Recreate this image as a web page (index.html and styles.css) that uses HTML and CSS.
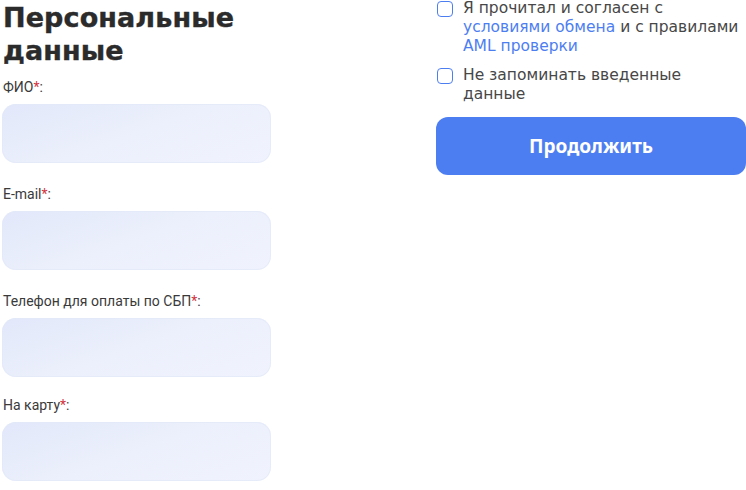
FILE: index.html
```html
<!DOCTYPE html>
<html lang="ru">
<head>
<meta charset="utf-8">
<link rel="stylesheet" href="styles.css">
</head>
<body>
<div class="page">
  <section class="personal">
    <h2 class="title">Персональные<br>данные</h2>
    <div class="field">
      <label class="label">ФИО<span class="req">*</span>:</label>
      <div class="input"></div>
    </div>
    <div class="field">
      <label class="label">E-mail<span class="req">*</span>:</label>
      <div class="input"></div>
    </div>
    <div class="field">
      <label class="label">Телефон для оплаты по СБП<span class="req">*</span>:</label>
      <div class="input"></div>
    </div>
    <div class="field field-last">
      <label class="label">На карту<span class="req">*</span>:</label>
      <div class="input"></div>
    </div>
  </section>
  <section class="confirm">
    <div class="check">
      <span class="box"></span>
      <span class="check-text">Я прочитал и согласен с<br><a class="link">условиями обмена</a> и с правилами<br><a class="link">AML проверки</a></span>
    </div>
    <div class="check">
      <span class="box"></span>
      <span class="check-text">Не запоминать введенные<br>данные</span>
    </div>
    <button class="submit">Продолжить</button>
  </section>
</div>
</body>
</html>
```
FILE: styles.css
```css
html, body {
  margin: 0;
  padding: 0;
  background: #ffffff;
  overflow: hidden;
}
.page {
  display: flex;
  gap: 165px;
  padding-left: 2px;
  width: 744px;
}
.personal {
  width: 269px;
  flex: none;
}
.title {
  margin: 0;
  padding-top: 1px;
  font-family: "DejaVu Sans", sans-serif;
  font-weight: 700;
  font-size: 27px;
  line-height: 33px;
  color: #2b2b2b;
  letter-spacing: 0.1px;
  padding-left: 1px;
  -webkit-text-stroke: 0.4px #2b2b2b;
}
.field {
  margin-top: 12px;
}
.field + .field {
  margin-top: 23px;
}
.field-last {
  margin-top: 20px !important;
}
.label {
  display: block;
  font-family: Roboto, "Liberation Sans", sans-serif;
  font-size: 14px;
  line-height: 16px;
  color: #3a3a3a;
  padding-left: 1px;
  margin-bottom: 9px;
}
.req {
  color: #d2343c;
}
.input {
  height: 59px;
  border-radius: 14px;
  background: linear-gradient(160deg, #e2e8fa 0%, #ecf0fc 50%, #f0f3fd 100%);
  box-shadow: inset 0 0 0 1px rgba(226, 232, 248, 0.7);
}
.confirm {
  width: 310px;
  flex: none;
}
.check {
  display: flex;
  align-items: flex-start;
  gap: 10px;
  margin-left: 1px;
}
.check + .check {
  margin-top: 11px;
}
.box {
  flex: none;
  width: 14px;
  height: 14px;
  border: 1.5px solid #4d7ef1;
  border-radius: 4px;
  margin-top: 1px;
}
.check-text {
  font-family: "DejaVu Sans", sans-serif;
  font-size: 15.5px;
  line-height: 19px;
  color: #474747;
  white-space: nowrap;
  margin-top: -1px;
}
.link {
  color: #4d7ef1;
  text-decoration: none;
}
.submit {
  display: block;
  margin-top: 13px;
  width: 310px;
  height: 58px;
  border: none;
  border-radius: 12px;
  background: #4d7ef1;
  color: #ffffff;
  font-family: "Noto Sans", sans-serif;
  font-weight: 700;
  font-size: 19px;
  padding: 0;
}
```
